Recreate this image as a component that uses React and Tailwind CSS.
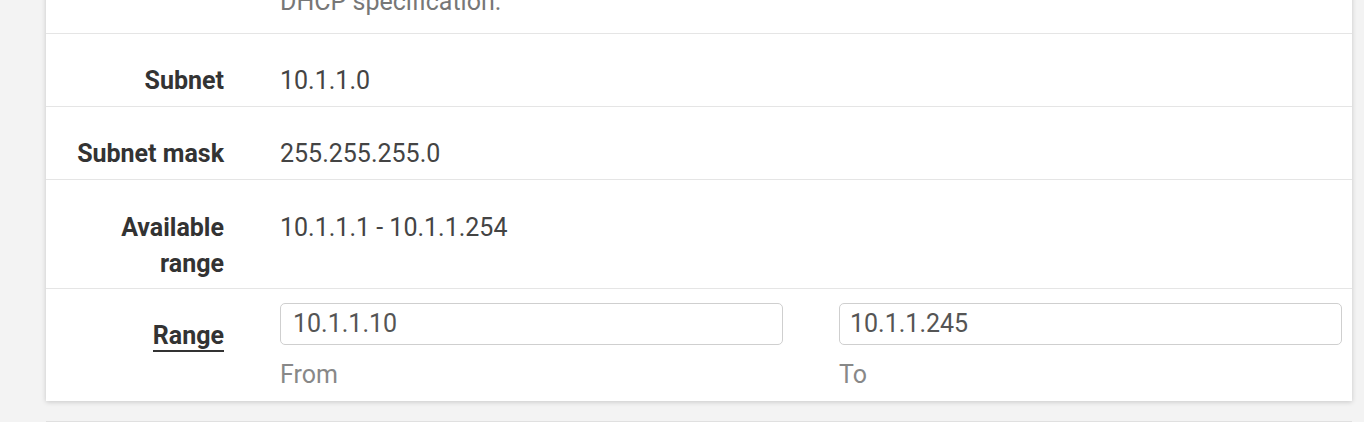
export default function App() {
  const font = { fontFamily: "Roboto, 'Noto Sans', sans-serif" };
  return (
    <div className="w-[1364px] h-[422px] overflow-hidden bg-[#f3f3f3] flex flex-col" style={font}>
      <div className="ml-[46px] mr-[12px] -mt-[16px] bg-white shadow-[0_1px_5px_rgba(0,0,0,0.18)] text-[25px] leading-[36px]">
        <div className="flex pb-[13px] border-b border-[#e5e5e5]">
          <div className="w-[206px] pr-[28px]"></div>
          <div className="flex-1 pl-[28px] text-[#777]">DHCP specification.</div>
        </div>
        <div className="flex pt-[29px] pb-[7px] border-b border-[#e5e5e5]">
          <div className="w-[206px] pr-[28px] text-right font-bold text-[#333]">Subnet</div>
          <div className="flex-1 pl-[28px] text-[#444]">10.1.1.0</div>
        </div>
        <div className="flex pt-[29px] pb-[7px] border-b border-[#e5e5e5]">
          <div className="w-[206px] pr-[28px] text-right font-bold text-[#333]">Subnet mask</div>
          <div className="flex-1 pl-[28px] text-[#444]">255.255.255.0</div>
        </div>
        <div className="flex pt-[30px] pb-[6px] border-b border-[#e5e5e5]">
          <div className="w-[206px] pr-[28px] pl-[40px] text-right font-bold text-[#333]">Available range</div>
          <div className="flex-1 pl-[28px] text-[#444]">10.1.1.1 - 10.1.1.254</div>
        </div>
        <div className="flex pt-[14px] pb-[8px]">
          <div className="w-[206px] pr-[28px] pt-[15px] text-right font-bold text-[#333]">
            <span className="border-b-2 border-[#333]">Range</span>
          </div>
          <div className="flex-1 pl-[28px] pr-[10px] flex gap-[56px]">
            <div className="flex-1 flex flex-col">
              <div className="h-[42px] border border-[#cfcfcf] rounded-[5px] px-[12px] flex items-center text-[#555]">10.1.1.10</div>
              <div className="mt-[12px] text-[#888]">From</div>
            </div>
            <div className="flex-1 flex flex-col">
              <div className="h-[42px] border border-[#cfcfcf] rounded-[5px] px-[10px] flex items-center text-[#555]">10.1.1.245</div>
              <div className="mt-[12px] text-[#888]">To</div>
            </div>
          </div>
        </div>
      </div>
      <div className="ml-[46px] mr-[12px] mt-[20px] h-[20px] bg-[#f5f5f5] border-t border-[#e0e0e0]"></div>
    </div>
  );
}
